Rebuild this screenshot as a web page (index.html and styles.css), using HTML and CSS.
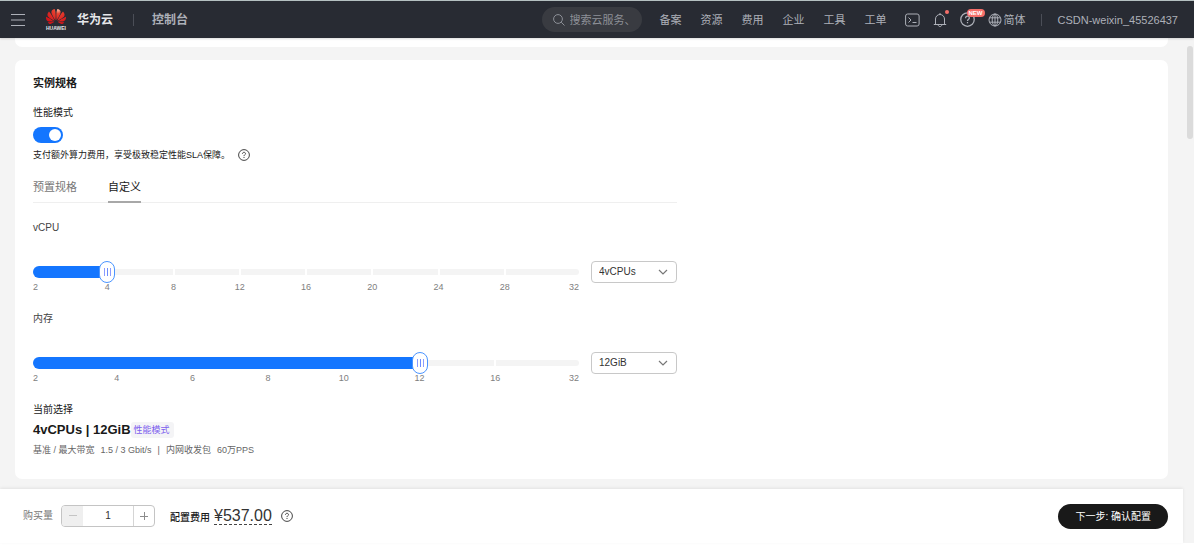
FILE: index.html
```html
<!DOCTYPE html>
<html lang="zh-CN">
<head>
<meta charset="utf-8">
<meta name="viewport" content="width=device-width, initial-scale=1">
<title>华为云 控制台</title>
<link rel="stylesheet" href="styles.css">
</head>
<body>
<svg class="defs" aria-hidden="true">
  <symbol id="help" viewBox="0 0 12 12">
    <circle cx="6" cy="6" r="5.4" fill="none" stroke="currentColor"/>
    <path d="M4.5 4.9C4.5 3.9 5.1 3.3 6 3.3s1.5.6 1.5 1.4C7.500 5.700 6 5.800 6 7.100M6 8v1" fill="none" stroke="currentColor"/>
  </symbol>
  <symbol id="chevron" viewBox="0 0 10 6">
    <path d="M1 1l4 4 4-4" fill="none" stroke="currentColor" stroke-width="1.2"/>
  </symbol>
</svg>

<header class="topbar">
  <button class="icon-btn menu" aria-label="菜单">
    <svg width="14" height="12" viewBox="0 0 14 12"><path d="M0 .5h14M0 6h14M0 11.500h14" stroke="currentColor" fill="none"/></svg>
  </button>
  <a class="brand" href="#">
    <span class="brand-mark">
      <svg width="20" height="17" viewBox="0 2 24 20">
        <defs><radialGradient id="petal" gradientUnits="userSpaceOnUse" cx="14.500" cy="4" r="17">
          <stop offset="0" stop-color="#f7b59c"/><stop offset=".28" stop-color="#e8402f"/><stop offset="1" stop-color="#d31319"/>
        </radialGradient></defs>
        <path fill="url(#petal)" d="M3.67 6.14S1.82 7.91 1.72 9.78v.35c.08 1.51 1.22 2.4 1.22 2.4 1.83 1.79 6.26 4.04 7.3 4.55 0 0 .06.03.1-.01l.02-.04v-.04C7.52 10.8 3.67 6.14 3.67 6.14zM9.65 18.6c-.02-.08-.1-.08-.1-.08l-7.38.26c.8 1.43 2.15 2.53 3.56 2.2.96-.25 3.16-1.78 3.88-2.3.06-.05.04-.09.04-.09zm.08-.78C6.49 15.63.21 12.28.21 12.28c-.15.46-.2.9-.21 1.3v.07c0 1.07.4 1.82.4 1.82.8 1.69 2.34 2.2 2.34 2.2.7.3 1.4.31 1.4.31.12.02 4.4 0 5.54 0 .05 0 .08-.05.08-.05v-.06c0-.03-.03-.05-.03-.05zM9.06 3.19a3.42 3.42 0 00-2.57 3.15v.41c.03.6.16 1.05.16 1.05.66 2.9 3.86 7.65 4.55 8.65.05.05.1.03.1.03a.1.1 0 00.06-.1c1.06-10.6-1.11-13.42-1.11-13.42-.32.02-1.19.23-1.19.23zm8.299 2.27s-.49-1.8-2.44-2.28c0 0-.57-.14-1.17-.22 0 0-2.18 2.81-1.12 13.43.01.07.06.08.06.08.07.03.1-.03.1-.03.72-1.03 3.9-5.76 4.55-8.64 0 0 .36-1.4.02-2.34zm-2.92 13.07s-.07 0-.09.05c0 0-.01.07.03.1.7.51 2.85 2 3.88 2.3 0 0 .16.05.43.06h.14c.69-.02 1.9-.37 3-2.26l-7.4-.25zm7.83-8.41c.14-2.06-1.94-3.97-1.94-3.98 0 0-3.85 4.66-6.67 10.8 0 0-.03.08.02.13l.04.01h.06c1.06-.53 5.46-2.77 7.28-4.54 0 0 1.15-.93 1.21-2.42zm1.52 2.14s-6.28 3.37-9.52 5.55c0 0-.05.04-.03.11 0 0 .03.06.07.06 1.16 0 5.56 0 5.67-.02 0 0 .57-.02 1.27-.29 0 0 1.56-.5 2.37-2.27 0 0 .73-1.45.17-3.14z"/>
      </svg>
      <span class="brand-word">HUAWEI</span>
    </span>
    <span class="brand-name">华为云</span>
  </a>
  <span class="divider"></span>
  <a class="console" href="#">控制台</a>

  <label class="search">
    <svg width="12" height="12" viewBox="0 0 12 12"><circle cx="5" cy="5" r="4.400" fill="none" stroke="currentColor"/><path d="M8.200 8.200l3.300 3.300" stroke="currentColor"/></svg>
    <input type="text" placeholder="搜索云服务、" aria-label="搜索云服务">
  </label>
  <nav class="links">
    <a href="#">备案</a><a href="#">资源</a><a href="#">费用</a><a href="#">企业</a><a href="#">工具</a><a href="#">工单</a>
  </nav>
  <div class="tools">
    <button class="icon-btn" aria-label="命令行">
      <svg width="15" height="14" viewBox="0 0 15 14"><rect x=".6" y="1" width="13.500" height="12" rx="2" fill="none" stroke="currentColor"/><path d="M3.500 4.500L6 7 3.500 9.500M7.500 9.500h4" fill="none" stroke="currentColor"/></svg>
    </button>
    <button class="icon-btn" aria-label="消息">
      <svg width="14" height="16" viewBox="0 0 14 16"><path d="M.8 12.500h12.400M2.500 12.500V7a4.500 4.500 0 0 1 9 0v5.500M7 1v1.500M5.200 12.800c.2 2.400 3.400 2.400 3.600 0" fill="none" stroke="currentColor"/></svg>
      <span class="dot"></span>
    </button>
    <button class="icon-btn" aria-label="帮助">
      <svg width="15" height="15"><use href="#help"/></svg>
      <span class="badge">NEW</span>
    </button>
    <button class="icon-btn language">
      <svg width="14" height="14" viewBox="0 0 14 14"><g fill="none" stroke="currentColor"><circle cx="7" cy="7" r="6"/><ellipse cx="7" cy="7" rx="2.800" ry="6"/><path d="M1.500 4.800h11M1.500 9.200h11M7 1v12"/></g></svg>
      <span>简体</span>
    </button>
  </div>
  <span class="divider"></span>
  <a class="user" href="#">CSDN-weixin_45526437</a>
</header>

<main class="page">
  <div class="content">
    <div class="card card-tail"></div>
    <section class="card spec">
      <h1>实例规格</h1>
      <label class="caption" for="perf">性能模式</label>
      <input class="switch" id="perf" type="checkbox" role="switch" checked>
      <p class="hint">支付额外算力费用，享受极致稳定性能SLA保障。<svg class="help" width="12" height="12"><use href="#help"/></svg></p>

      <div class="config">
        <div class="tabs" role="tablist">
          <button class="tab" role="tab" aria-selected="false">预置规格</button>
          <button class="tab" role="tab" aria-selected="true">自定义</button>
        </div>

        <div class="field">
          <label class="caption" for="cpu">vCPU</label>
          <div class="field-row">
            <div class="slider" style="--pos: 0.125">
              <div class="rail"><i></i><i></i><i></i><i></i><i></i><i></i><i></i><i></i></div>
              <div class="fill"></div>
              <input id="cpu" type="range" min="0" max="8" value="1">
            </div>
            <div class="select">
              <select aria-label="vCPU 数量"><option>4vCPUs</option></select>
              <svg width="10" height="6"><use href="#chevron"/></svg>
            </div>
            <div class="scale"><span>2</span><span>4</span><span>8</span><span>12</span><span>16</span><span>20</span><span>24</span><span>28</span><span>32</span></div>
          </div>
        </div>

        <div class="field">
          <label class="caption" for="mem">内存</label>
          <div class="field-row">
            <div class="slider" style="--pos: 0.7143">
              <div class="rail"><i></i><i></i><i></i><i></i><i></i><i></i><i></i></div>
              <div class="fill"></div>
              <input id="mem" type="range" min="0" max="7" value="5">
            </div>
            <div class="select">
              <select aria-label="内存大小"><option>12GiB</option></select>
              <svg width="10" height="6"><use href="#chevron"/></svg>
            </div>
            <div class="scale"><span>2</span><span>4</span><span>6</span><span>8</span><span>10</span><span>12</span><span>16</span><span>32</span></div>
          </div>
        </div>
      </div>

      <div class="summary">
        <p class="caption">当前选择</p>
        <p class="chosen"><strong>4vCPUs | 12GiB</strong><span class="tag">性能模式</span></p>
        <p class="detail"><span>基准 / 最大带宽</span><span>1.5 / 3 Gbit/s</span><span>|</span><span>内网收发包</span><span>60万PPS</span></p>
      </div>
    </section>
  </div>
  <div class="scrollbar"><div class="scroll-thumb"></div></div>
</main>

<footer class="order">
  <div class="order-bar">
    <label class="qty-label" for="qty">购买量</label>
    <div class="stepper">
      <button aria-label="减少" disabled><svg width="8" height="8" viewBox="0 0 8 8"><path d="M0 3.500h8" stroke="currentColor"/></svg></button>
      <input id="qty" type="text" value="1">
      <button class="plus" aria-label="增加"><svg width="8" height="8" viewBox="0 0 8 8"><path d="M0 4.500h8M4.500 0v8" stroke="currentColor"/></svg></button>
    </div>
    <p class="cost"><span class="cost-label">配置费用</span><span class="price">¥537.00</span></p>
    <svg class="help" width="12" height="12"><use href="#help"/></svg>
    <button class="next">下一步: 确认配置</button>
  </div>
</footer>
</body>
</html>
```

FILE: styles.css
```css
* { box-sizing: border-box; }

body {
  margin: 0;
  height: 100vh;
  padding-bottom: 8px;
  display: flex;
  flex-direction: column;
  overflow: hidden;
  background: #fff;
  color: #191919;
  font: 10px/16px "Liberation Sans", "Noto Sans CJK SC", sans-serif;
}

h1, p { margin: 0; }
a { color: inherit; text-decoration: none; }
button, input, select { font: inherit; color: inherit; }
button { padding: 0; border: 0; background: none; }
svg { display: block; flex: none; }
.defs { position: absolute; width: 0; height: 0; }

/* top bar */
.topbar {
  flex: none;
  height: 38px;
  padding: 0 16px 0 11px;
  display: flex;
  align-items: center;
  position: relative;
  border-top: 1px solid #b5c0c1;
  background: #282b33;
  box-shadow: 0 1px 2px rgba(0, 0, 0, .15);
  color: #adb0b8;
  font-size: 11px;
}
.icon-btn { position: relative; display: flex; align-items: center; }
.brand { display: flex; align-items: center; gap: 11px; margin-left: 21px; color: #e6e7ea; }
.brand-mark { display: flex; flex-direction: column; align-items: center; }
.brand-word { font-size: 5px; line-height: 6px; font-weight: 700; }
.brand-name { font-size: 12px; font-weight: 700; }
.divider { width: 1px; height: 12px; background: #4b4e57; }
.brand + .divider { margin: 0 18px 0 20px; }
.console { font-size: 12px; font-weight: 700; }
.search {
  display: flex;
  align-items: center;
  gap: 5px;
  width: 100px;
  height: 25px;
  margin-left: auto;
  padding: 0 10px 0 11px;
  border-radius: 13px;
  background: #393b41;
  color: #8d9097;
}
.search input { flex: 1; min-width: 0; padding: 0; border: 0; outline: 0; background: none; }
.search input::placeholder { color: #8d9097; opacity: 1; }
.links { display: flex; gap: 19px; margin: 0 18px; }
.tools { display: flex; align-items: center; gap: 13px; }
.language { gap: 2px; }
.dot { position: absolute; top: -2px; right: -2px; width: 4px; height: 4px; border-radius: 50%; background: #f66f6a; }
.badge {
  position: absolute;
  top: -3px;
  left: 7px;
  padding: 0 2px;
  border-radius: 4px;
  background: #f66f6a;
  color: #fff;
  font-size: 6px;
  line-height: 8px;
  font-weight: 700;
}
.tools + .divider { margin: 0 16px 0 15px; }

/* page body */
.page { flex: 1; min-height: 0; display: flex; background: #f4f4f4; }
.content { flex: 1; display: flex; flex-direction: column; gap: 13px; padding: 0 18px 0 15px; }
.card { border-radius: 7px; background: #fff; }
.card-tail { height: 9px; border-radius: 0 0 7px 7px; }
.spec { padding: 13px 18px 21px; }
.scrollbar { width: 8px; padding: 8px 1px 0; }
.scroll-thumb { height: 93px; border-radius: 3px; background: #dbdbdb; }

h1 { font-size: 11px; line-height: 20px; font-weight: 700; }
.caption { display: block; }
h1 + .caption { margin-top: 12px; }
.switch {
  appearance: none;
  display: flex;
  justify-content: flex-end;
  align-items: center;
  width: 30px;
  height: 16px;
  margin: 6px 0 4px;
  padding: 2px;
  border-radius: 8px;
  background: #1476ff;
}
.switch::before { content: ""; width: 12px; height: 12px; border-radius: 50%; background: #fff; }
.hint { display: flex; align-items: center; gap: 8px; font-size: 9px; }

.config { max-width: 644px; }
.tabs { display: flex; gap: 31px; margin-top: 14px; border-bottom: 1px solid #efefef; }
.tab { padding-bottom: 4px; margin-bottom: -1px; border-bottom: 2px solid transparent; color: #777; font-size: 11px; line-height: 20px; }
.tab[aria-selected="true"] { border-color: #a8a8a8; color: #191919; }

/* sliders */
.field { margin-top: 17px; color: #444; }
.field-row { display: grid; grid-template-columns: 1fr 86px; column-gap: 12px; align-items: center; margin-top: 25px; }
.field + .field { margin-top: 18px; }
.slider { display: grid; align-items: center; }
.slider > * { grid-area: 1 / 1; }
.rail { display: flex; gap: 2px; height: 6px; border-radius: 3px; overflow: hidden; }
.rail i { flex: 1 1 0; background: #f4f4f4; }
.rail i:first-child, .rail i:last-child { flex-basis: 9px; }
.fill { width: calc(8px + (100% - 16px) * var(--pos)); height: 12px; border-radius: 6px 0 0 6px; background: #1476ff; }
.slider input { appearance: none; position: relative; z-index: 1; width: 100%; height: 22px; margin: 0; background: none; }
.slider input::-webkit-slider-thumb {
  appearance: none;
  width: 16px;
  height: 22px;
  border: 1px solid #4b95ff;
  border-radius: 8px;
  background:
    linear-gradient(#8b9cff, #8b9cff) 4px center / 1px 8px no-repeat,
    linear-gradient(#6c8cff, #6c8cff) 7px center / 1px 8px no-repeat,
    linear-gradient(#8b9cff, #8b9cff) 10px center / 1px 8px no-repeat,
    #fff;
}
.scale { display: flex; justify-content: space-between; margin-top: -2px; padding: 0 8px; color: #808080; font-size: 9px; line-height: 12px; }
.scale span { display: flex; justify-content: center; width: 0; }
.scale span:first-child { justify-content: flex-start; margin: 0 8px 0 -8px; }
.scale span:last-child { justify-content: flex-end; margin: 0 -8px 0 8px; }

.select { display: grid; align-items: center; }
.select > * { grid-area: 1 / 1; }
.select select { appearance: none; height: 22px; padding: 0 7px; border: 1px solid #c8c8c8; border-radius: 4px; background: #fff; color: #333; }
.select svg { justify-self: end; margin-right: 9px; color: #777; pointer-events: none; }

/* summary */
.summary { margin-top: 18px; }
.chosen { display: flex; align-items: center; margin-top: 2px; line-height: 20px; }
.chosen strong { font-size: 13px; }
.tag { padding: 0 4px 0 3px; border-radius: 3px; background: #f4f4f6; color: #7d5fee; font-size: 9px; line-height: 16px; }
.detail { display: flex; gap: 6px; margin-top: 2px; color: #666; font-size: 9px; }

/* order bar */
.order { flex: none; padding-right: 11px; background: #f4f4f4; }
.order-bar {
  display: flex;
  align-items: center;
  height: 54px;
  padding: 0 15px 0 23px;
  background: #fff;
  box-shadow: 0 -1px 3px rgba(0, 0, 0, .08);
}
.qty-label { color: #777; }
.stepper { display: flex; width: 94px; height: 22px; margin: 0 15px 0 8px; border: 1px solid #c4c4c4; border-radius: 4px; overflow: hidden; }
.stepper button { display: grid; place-items: center; flex: 0 0 21px; color: #8c8c8c; }
.stepper button:disabled { background: #efefef; color: #c4c4c4; }
.stepper .plus { border-left: 1px solid #d5d5d5; }
.stepper input { flex: 1; min-width: 0; padding: 0; border: 0; outline: 0; text-align: center; color: #333; }
.cost { display: flex; align-items: baseline; gap: 4px; padding-top: 2px; }
.cost-label { font-weight: 500; }
.price { border-bottom: 1px dashed #444; color: #333; font-size: 16px; line-height: 16px; }
.help { color: #444; }
.cost + .help { margin-left: 9px; }
.next { margin-left: auto; padding: 0 17px; line-height: 25px; border-radius: 13px; background: #191919; color: #fff; }
```
